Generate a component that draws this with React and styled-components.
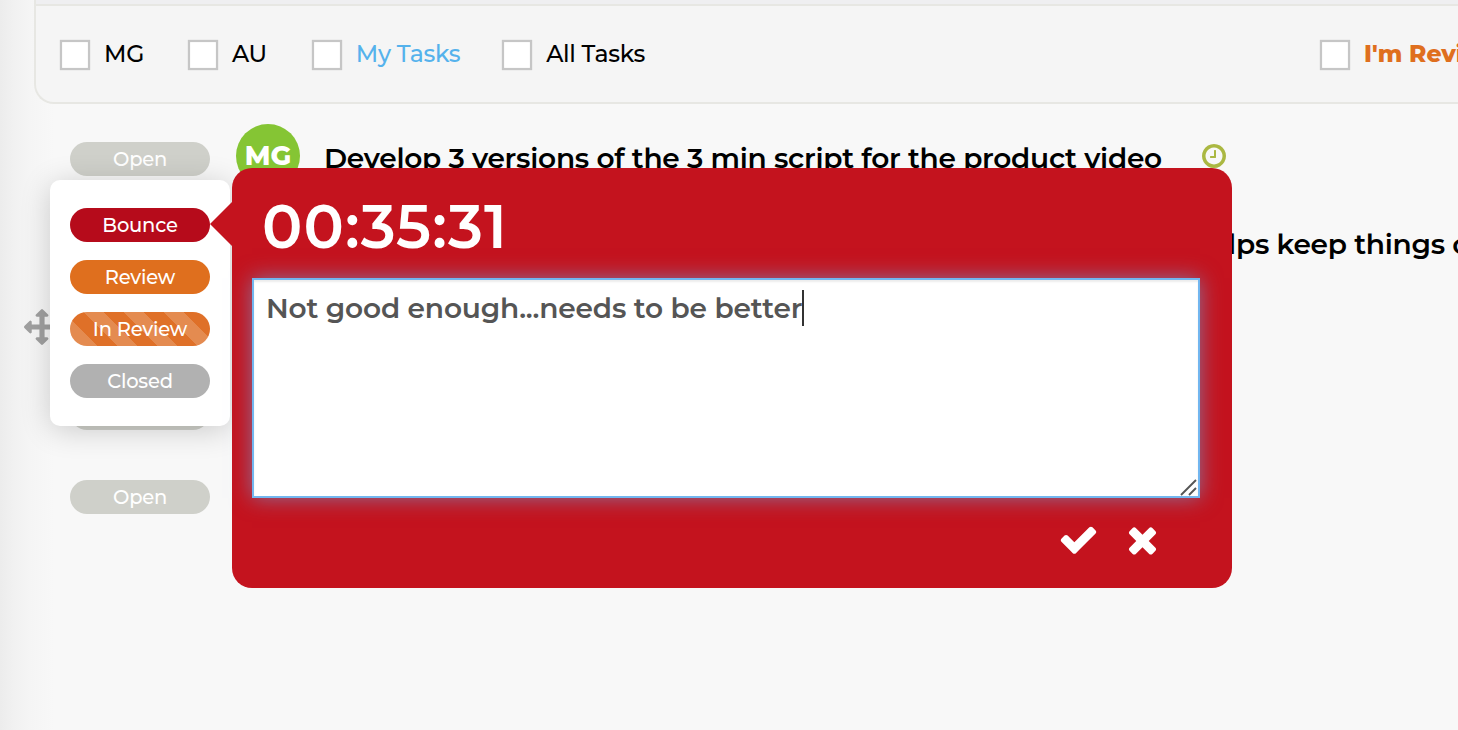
import React from "react";
import styled, { createGlobalStyle } from "styled-components";

const filters = [
    { label: "MG", gap: 44 },
    { label: "AU", gap: 45 },
    { label: "My Tasks", color: "#55b2ec", gap: 42 },
    { label: "All Tasks" },
];

const tasks = [
    { id: 1, height: 86, initials: "MG", title: "Develop 3 versions of the 3 min script for the product video", timed: true },
    { id: 2, height: 84, title: "helps keep things on track", indent: 982 },
    { id: 3, height: 84, draggable: true },
    { id: 4, height: 84 },
    { id: 5, height: 84 },
];

const statuses = [
    { label: "Bounce", color: "#b60b1b" },
    { label: "Review", color: "#df6f1e" },
    { label: "In Review", color: "#df7028", striped: true },
    { label: "Closed", color: "#b1b1b1" },
];

const icons = {
    check: "M1671 566q0 40-28 68l-724 724-136 136q-28 28-68 28t-68-28l-136-136-362-362q-28-28-28-68t28-68l136-136q28-28 68-28t68 28l294 295 656-657q28-28 68-28t68 28l136 136q28 28 28 68z",
    times: "M1490 1322q0 40-28 68l-136 136q-28 28-68 28t-68-28l-294-294-294 294q-28 28-68 28t-68-28l-136-136q-28-28-28-68t28-68l294-294-294-294q-28-28-28-68t28-68l136-136q28-28 68-28t68 28l294 294 294-294q28-28 68-28t68 28l136 136q28 28 28 68t-28 68l-294 294 294 294q28 28 28 68z",
    arrows: "M1792 896q0 26-19 45l-256 256q-19 19-45 19t-45-19-19-45v-128h-384v384h128q26 0 45 19t19 45-19 45l-256 256q-19 19-45 19t-45-19l-256-256q-19-19-19-45t19-45 45-19h128v-384h-384v128q0 26-19 45t-45 19-45-19l-256-256q-19-19-19-45t19-45l256-256q19-19 45-19t45 19 19 45v128h384v-384h-128q-26 0-45-19t-19-45 19-45l256-256q19-19 45-19t45 19l256 256q19 19 19 45t-19 45-45 19h-128v384h384v-128q0-26 19-45t45-19 45 19l256 256q19 19 19 45z",
    clock: "M1024 544v448q0 14-9 23t-23 9h-320q-14 0-23-9t-9-23v-64q0-14 9-23t23-9h224v-352q0-14 9-23t23-9h64q14 0 23 9t9 23zm416 352q0-148-73-273t-198-198-273-73-273 73-198 198-73 273 73 273 198 198 273 73 273-73 198-198 73-273zm224 0q0 209-103 385.5t-279.5 279.5-385.5 103-385.5-103-279.5-279.5-103-385.5 103-385.5 279.5-279.5 385.5-103 385.5 103 279.5 279.5 103 385.5z",
};

function Icon({ name, size }) {
    return (
        <svg width={size} height={size} viewBox="0 0 1792 1792" fill="currentColor">
            <path d={icons[name]} />
        </svg>
    );
}

function Task({ task }) {
    return (
        <TaskRow $height={task.height}>
            <Handle>{task.draggable ? <Icon name="arrows" size={36} /> : <></>}</Handle>
            <Pill $color="#cfd0ca">Open</Pill>
            {task.initials ? <Avatar>{task.initials}</Avatar> : <></>}
            {task.title ? <TaskTitle $indent={task.indent}>{task.title}</TaskTitle> : <></>}
            {task.timed ? <Clock><Icon name="clock" size={28} /></Clock> : <></>}
        </TaskRow>
    );
}

export default function App() {
    return (
        <Page>
            <GlobalStyle />
            <FilterPanel>
                {filters.map(filter => (
                    <Filter key={filter.label} $color={filter.color} $gap={filter.gap}>
                        <Checkbox />
                        <FilterLabel>{filter.label}</FilterLabel>
                    </Filter>
                ))}
                <ReviewFilter>
                    <Checkbox />
                    <ReviewLabel>I'm Reviewing</ReviewLabel>
                </ReviewFilter>
            </FilterPanel>

            <TaskList>
                {tasks.map(task => <Task key={task.id} task={task} />)}
            </TaskList>

            <StatusMenu>
                {statuses.map(status => (
                    <Pill key={status.label} $color={status.color} $striped={status.striped}>
                        {status.label}
                    </Pill>
                ))}
            </StatusMenu>

            <BouncePopover>
                <Timer>00:35:31</Timer>
                <Note>
                    <NoteText>Not good enough...needs to be better</NoteText>
                    <Caret />
                    <Resizer width="18" height="18" viewBox="0 0 18 18">
                        <path d="M1 16 L16 1 M9 16 L16 9" stroke="#555" strokeWidth="1.9" />
                    </Resizer>
                </Note>
                <Actions>
                    <Icon name="check" size={41} />
                    <Icon name="times" size={41} />
                </Actions>
            </BouncePopover>
        </Page>
    );
}

const GlobalStyle = createGlobalStyle`
    * {
        box-sizing: border-box;
    }
    body {
        margin: 0;
        font-family: 'Montserrat', 'Inter', sans-serif;
        background: #f8f8f8;
        overflow: hidden;
    }
    svg {
        display: block;
        flex-shrink: 0;
    }
`;

const Page = styled.div`
    position: relative;
    width: 1458px;
    height: 730px;
    overflow: hidden;
    background: linear-gradient(90deg, #ececec 0, #f1f1f1 14px, #f5f5f5 30px, #f8f8f8 54px);
`;

const FilterPanel = styled.div`
    display: flex;
    align-items: center;
    height: 104px;
    margin-left: 34px;
    padding: 5px 0 0 24px;
    border: 2px solid #e7e7e3;
    border-width: 0 0 2px 2px;
    border-bottom-left-radius: 20px;
    background: linear-gradient(#efeff1 4px, #e7e7e3 4px, #e7e7e3 6px, #f5f5f5 6px);
    white-space: nowrap;
`;

const Filter = styled.div`
    display: flex;
    align-items: center;
    margin-right: ${props => props.$gap || 0}px;
    color: ${props => props.$color || "#000"};
`;

const ReviewFilter = styled(Filter)`
    width: 138px;
    margin-left: auto;
    color: #df6f1e;
`;

const Checkbox = styled.div`
    flex-shrink: 0;
    width: 30px;
    height: 30px;
    margin: 2px 14px 0 0;
    border: 2px solid #c6c6c6;
    background: #fff;
    box-shadow: 0 0 1px #c6c6c6, inset 0 0 1px #c6c6c6;
`;

const FilterLabel = styled.span`
    font-size: 23.5px;
    font-weight: 500;
    line-height: 30px;
    letter-spacing: -0.3px;
`;

const ReviewLabel = styled(FilterLabel)`
    font-weight: 800;
    letter-spacing: 0;
`;

const TaskList = styled.div`
    padding: 20px 0 0 24px;
`;

const TaskRow = styled.div`
    display: flex;
    align-items: flex-start;
    height: ${props => props.$height}px;
    padding-top: 18px;
    white-space: nowrap;
`;

const Handle = styled.div`
    width: 46px;
    flex-shrink: 0;
    margin-top: -3px;
    color: #a0a0a0;
`;

const Pill = styled.div`
    flex-shrink: 0;
    width: 140px;
    height: 34px;
    border-radius: 17px;
    color: #fff;
    font-size: 19.5px;
    font-weight: 500;
    letter-spacing: -0.2px;
    line-height: 34px;
    text-align: center;
    background: ${props => props.$striped
        ? `repeating-linear-gradient(45deg, ${props.$color} 0 5px, #e48b50 5px 19.1px, ${props.$color} 19.1px 28.3px)`
        : props.$color};
`;

const Avatar = styled.div`
    width: 64px;
    height: 64px;
    margin: -18px 0 0 26px;
    border-radius: 50%;
    background: #85c534;
    color: #fff;
    font-size: 27px;
    font-weight: 800;
    line-height: 64px;
    text-align: center;
`;

const TaskTitle = styled.div`
    margin-left: ${props => props.$indent || 24}px;
    color: #000;
    font-size: 28px;
    font-weight: 600;
    letter-spacing: -0.26px;
    line-height: 32px;
`;

const Clock = styled.div`
    margin: 0 0 0 38px;
    color: #abb842;
`;

const StatusMenu = styled.div`
    position: absolute;
    left: 50px;
    top: 180px;
    display: flex;
    flex-direction: column;
    gap: 18px;
    width: 180px;
    height: 246px;
    padding: 28px 20px;
    border-radius: 10px;
    background: #fff;
    box-shadow: 0 4px 30px rgba(0, 0, 0, 0.19);
`;

const BouncePopover = styled.div`
    position: absolute;
    left: 232px;
    top: 168px;
    width: 1000px;
    height: 420px;
    padding: 25px 32px 0 20px;
    border-radius: 20px;
    background: #c4131e;

    &::before {
        content: "";
        position: absolute;
        left: -22px;
        top: 34px;
        border: 22px solid transparent;
        border-left: 0;
        border-right-color: #c4131e;
    }
`;

const Timer = styled.div`
    height: 85px;
    padding-left: 10px;
    color: #fff;
    font-size: 60px;
    font-weight: 600;
    letter-spacing: 1.1px;
    line-height: 68px;
`;

const Note = styled.div`
    position: relative;
    display: flex;
    height: 220px;
    padding: 10px 12px;
    border: 2px solid #72b6ef;
    background: #fff;
    box-shadow: inset 0 2px 2px rgba(0, 0, 0, 0.075), 0 0 20px rgba(102, 175, 233, 0.6);
`;

const NoteText = styled.span`
    color: #555;
    font-size: 28px;
    font-weight: 600;
    letter-spacing: -0.14px;
    line-height: 36px;
    white-space: nowrap;
`;

const Caret = styled.span`
    width: 2px;
    height: 36px;
    background: #333;
`;

const Resizer = styled.svg`
    position: absolute;
    right: 0;
    bottom: -1px;
`;

const Actions = styled.div`
    display: flex;
    justify-content: flex-end;
    gap: 23px;
    padding: 21px 37px 0 0;
    color: #fff;
`;
